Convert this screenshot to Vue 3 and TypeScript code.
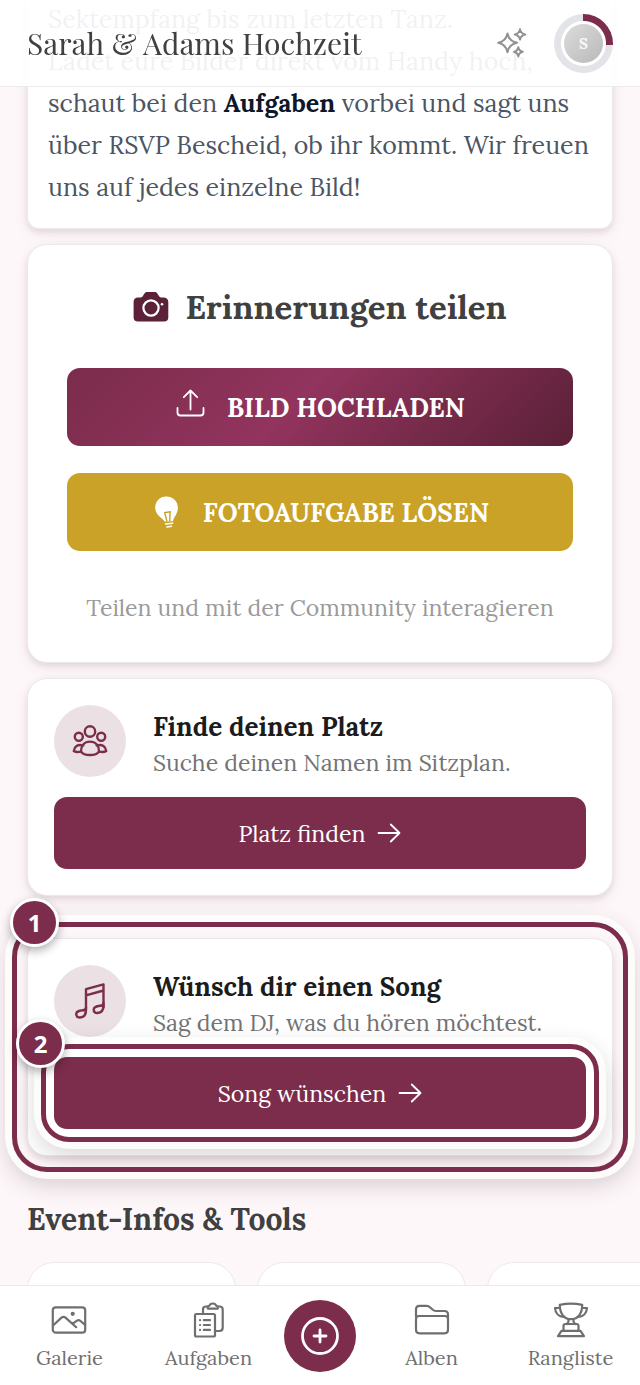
<script setup lang="ts">
import { ref } from 'vue'

interface NavItem {
  label: string
  icon: 'gallery' | 'tasks' | 'albums' | 'ranking'
}

const eventTitle = 'Sarah & Adams Hochzeit'
const leftNav: NavItem[] = [
  { label: 'Galerie', icon: 'gallery' },
  { label: 'Aufgaben', icon: 'tasks' },
]
const rightNav: NavItem[] = [
  { label: 'Alben', icon: 'albums' },
  { label: 'Rangliste', icon: 'ranking' },
]
const toolCards = ref<number[]>([1, 2, 3])
</script>

<template>
  <div class="app">
    <header class="topbar">
      <h1 class="topbar-title">{{ eventTitle }}</h1>
      <div class="topbar-actions">
        <button class="icon-button" type="button" aria-label="Highlights">
          <svg width="30" height="30" viewBox="0 0 30 30" fill="none" stroke="currentColor" stroke-width="2" stroke-linejoin="round">
            <path d="M10.5 5.5Q12 13.2 20 14.8Q12 16.400 10.500 24.200Q9 16.400 1.200 14.800Q9 13.200 10.500 5.500Z" />
            <path d="M23 1.200Q23.700 5.600 28.300 6.500Q23.700 7.400 23 11.600Q22.300 7.400 17.800 6.500Q22.300 5.600 23 1.200Z" />
            <path d="M21.300 19.200Q22 23 25.800 23.800Q22 24.600 21.300 28.400Q20.600 24.600 17 23.800Q20.600 23 21.300 19.200Z" />
          </svg>
        </button>
        <button class="avatar" type="button" aria-label="Profil">
          <span class="avatar-face">S</span>
        </button>
      </div>
    </header>

    <main class="content">
      <section class="card welcome">
        <p>
          Sektempfang bis zum letzten Tanz.<br />
          Ladet eure Bilder direkt vom Handy hoch,<br />
          schaut bei den <strong>Aufgaben</strong> vorbei und sagt uns<br />
          über RSVP Bescheid, ob ihr kommt. Wir freuen<br />
          uns auf jedes einzelne Bild!
        </p>
      </section>

      <section class="card share">
        <h2 class="share-title">
          <svg width="36" height="32" viewBox="0 0 36 32">
            <path fill="#5c2139" d="M5 6.500H7.500C9 6.500 9.500 5.600 10.300 4.300L11.500 2.500C12.200 1.400 13 1 14.300 1H21.500C22.800 1 23.600 1.400 24.300 2.500L25.500 4.300C26.300 5.600 26.800 6.500 28.300 6.500H30.500C33.500 6.500 35.300 8 35.300 11V26.500C35.300 29.200 33.800 30.600 31 30.600H5C2.200 30.600 .6 29.200 .6 26.500V11C.6 8 2.200 6.500 5 6.500Z" />
            <circle cx="18" cy="17" r="7.600" fill="none" stroke="#fff" stroke-width="2.200" />
            <circle cx="29" cy="13.300" r="1.300" fill="#fff" />
          </svg>
          Erinnerungen teilen
        </h2>
        <div class="share-buttons">
          <button class="big-button upload" type="button">
            <svg class="raised" width="31" height="28" viewBox="-1.500 0 31 28" fill="none" stroke="currentColor" stroke-width="1.800" stroke-linecap="round" stroke-linejoin="round">
              <path d="M14 20.500V1.500M7.300 8.200L14 1.500L20.700 8.200M1 19V23.500Q1 26.500 4 26.500H24Q27 26.500 27 23.500V19" />
            </svg>
            BILD HOCHLADEN
          </button>
          <button class="big-button task" type="button">
            <svg width="31" height="32" viewBox="-3.500 0 31 32">
              <path fill="#fff" d="M11.700 .5C18.500 .5 23.400 5.400 23.400 11.800C23.400 18.200 19 21 18.600 25.300L10 25.600C9 22.500 .7 19.600 .7 11.500C.7 5.300 5.300 .5 11.700 .5Z" />
              <path fill="none" stroke="#c9a227" stroke-width="1.400" d="M10.200 16.500L12.400 25.300M15.600 16L15.200 25.200M9.500 16.700L16.500 15.800" />
              <path fill="none" stroke="#fff" stroke-width="1.600" stroke-linecap="round" d="M11 28L18.200 27.200M12.500 31L17 30.200" />
            </svg>
            FOTOAUFGABE LÖSEN
          </button>
        </div>
        <p class="share-note">Teilen und mit der Community interagieren</p>
      </section>

      <section class="card action">
        <div class="action-head">
          <span class="bubble">
            <svg width="36" height="34" viewBox="0 0 36 34" fill="none" stroke="currentColor" stroke-width="2.400" stroke-linecap="round" stroke-linejoin="round">
              <circle cx="18" cy="7.500" r="5.200" />
              <circle cx="6.800" cy="12.800" r="4" />
              <circle cx="29.200" cy="12.800" r="4" />
              <path d="M9 27.600C9 21.500 12.500 17.600 18 17.600S27 21.500 27 27.600C25.500 29.800 22 31 18 31S10.500 29.800 9 27.600Z" />
              <path d="M11.300 21.400C5.500 20 2.200 22.500 1.800 27C3.600 28.200 6 28.200 9 27.600M24.700 21.400C30.500 20 33.800 22.500 34.200 27C32.400 28.200 30 28.200 27 27.600" />
            </svg>
          </span>
          <div class="action-text">
            <h3>Finde deinen Platz</h3>
            <p>Suche deinen Namen im Sitzplan.</p>
          </div>
        </div>
        <button class="wide-button" type="button">
          Platz finden
          <svg width="24" height="20" viewBox="0 0 24 20" fill="none" stroke="currentColor" stroke-width="1.800" stroke-linecap="round" stroke-linejoin="round">
            <path d="M1.500 10H22.500M13.800 1.500L22.500 10L13.800 18.500" />
          </svg>
        </button>
      </section>

      <section class="card action highlighted">
        <div class="action-head">
          <span class="bubble">
            <svg width="30" height="36" viewBox="0 0 30 36" fill="none" stroke="currentColor" stroke-width="2.400" stroke-linecap="round" stroke-linejoin="round">
              <path d="M11 26.500V6.200L28.500 1.400V24.200M11 12.300L28.500 7.500" />
              <path d="M11 26.500C11 32 8.500 34.500 5 34.500C2.500 34.500 1.200 33 1.200 31C1.200 27.800 4.500 27.500 8 27.200C10 27 11 26.500 11 24.500" />
              <path d="M28.500 22C28.500 27.500 26 30 22.500 30C20 30 18.700 28.500 18.700 26.500C18.700 23.500 22 23.200 25.500 22.700C27.500 22.400 28.500 22 28.500 20" />
            </svg>
          </span>
          <div class="action-text">
            <h3>Wünsch dir einen Song</h3>
            <p>Sag dem DJ, was du hören möchtest.</p>
          </div>
        </div>
        <div class="spot">
          <button class="wide-button" type="button">
            Song wünschen
            <svg width="24" height="20" viewBox="0 0 24 20" fill="none" stroke="currentColor" stroke-width="1.800" stroke-linecap="round" stroke-linejoin="round">
              <path d="M1.500 10H22.500M13.800 1.500L22.500 10L13.800 18.500" />
            </svg>
          </button>
          <span class="ring ring-inner"></span>
          <span class="badge badge-inner">2</span>
        </div>
        <span class="ring ring-outer"></span>
        <span class="badge badge-outer">1</span>
      </section>

      <section class="tools">
        <h2>Event-Infos &amp; Tools</h2>
        <div class="tool-row">
          <article v-for="n in toolCards" :key="n" class="tool-card"></article>
        </div>
      </section>
    </main>

    <nav class="tabbar">
      <a v-for="item in leftNav" :key="item.label" class="tab" href="#">
        <svg v-if="item.icon === 'gallery'" width="36" height="36" viewBox="0 0 36 36" fill="none" stroke="currentColor" stroke-width="2.200" stroke-linecap="round" stroke-linejoin="round">
          <rect x="1.800" y="5.300" width="32.400" height="25.400" rx="3" />
          <path d="M2 23.500L10.500 15.600Q12.500 14 14.500 15.600L25.200 25.200M21.500 21.800L26 18.600Q27.800 17.500 29.500 19L34 22.800" />
          <circle cx="21.700" cy="11.800" r="1" fill="currentColor" />
        </svg>
        <svg v-else width="36" height="36" viewBox="0 0 36 36" fill="none" stroke="currentColor" stroke-width="2.200" stroke-linecap="round" stroke-linejoin="round">
          <rect x="4" y="12" width="20" height="22.500" rx="1.500" />
          <path d="M12 11.500V7.500Q12 4.500 15 4.500H16.500M27 4.500H28.500Q31.700 4.500 31.700 7.500V25.500Q31.700 29 28.500 29H25" />
          <path d="M16.800 6.600V4.500Q18.500 3.700 19.200 2.400Q20 1.500 21.800 1.500T24.400 2.400Q25.100 3.700 26.800 4.500V6.600Z" />
          <path d="M9 18.200H9.100M12.800 18.200H19M9 23H9.100M12.800 23H19M9 27.900H9.100M12.800 27.900H19" />
        </svg>
        <span>{{ item.label }}</span>
      </a>

      <button class="fab" type="button" aria-label="Hinzufügen">
        <svg width="40" height="40" viewBox="0 0 40 40" fill="none" stroke="currentColor" stroke-width="2.800" stroke-linecap="round">
          <circle cx="20" cy="20" r="17.500" />
          <path d="M20 14V26M14 20H26" />
        </svg>
      </button>

      <a v-for="item in rightNav" :key="item.label" class="tab" href="#">
        <svg v-if="item.icon === 'albums'" width="36" height="36" viewBox="0 0 36 36" fill="none" stroke="currentColor" stroke-width="2.200" stroke-linecap="round" stroke-linejoin="round">
          <path d="M2 14.500V7.500Q2 3.800 5.500 3.800H12.500Q14.500 3.800 16 5.200L18.500 7.500Q20 9 22 9H30.500Q34 9 34 12.500V27.500Q34 31.300 30.500 31.300H5.500Q2 31.300 2 27.500V17Q2 14 5 14H31Q34 14 34 17" />
        </svg>
        <svg v-else width="36" height="36" viewBox="0 0 36 36" fill="none" stroke="currentColor" stroke-width="2.200" stroke-linecap="round" stroke-linejoin="round">
          <path d="M6.800 2.800Q18 .5 29.200 2.800C29.200 11 25.500 17.200 18 17.200S6.800 11 6.800 2.800Z" />
          <path d="M7 6H2C2.300 11 5.500 14.800 11.300 14.800M29 6H34C33.700 11 30.500 14.800 24.700 14.800" />
          <path d="M15.500 17.200V19.500L14 22M20.500 17.200V19.500L22 22M10.500 28.500V24Q10.500 22 12.500 22H23.500Q25.500 22 25.500 24V28.500" />
          <path d="M8.500 28.800H27.500L31 34.200H5Z" />
        </svg>
        <span>{{ item.label }}</span>
      </a>
    </nav>
  </div>
</template>

<style scoped>
.app {
  --wine: #7b2d4b;
  --line: #ebe9eb;
  position: relative;
  height: 100vh;
  overflow: hidden;
  background: #fef7f9;
  font-family: 'Lora', 'Liberation Serif', serif;
  color: #404040;
}

h1, h2, h3, p {
  margin: 0;
}

button {
  font-family: inherit;
  border: 0;
  padding: 0;
  cursor: pointer;
}

svg {
  flex: none;
  display: block;
}

.topbar {
  position: fixed;
  top: 0;
  left: 0;
  right: 0;
  z-index: 10;
  display: flex;
  align-items: center;
  justify-content: space-between;
  height: 87px;
  box-sizing: border-box;
  padding: 0 27px;
  background: rgba(255, 255, 255, 0.92);
  border-bottom: 1px solid #ebebeb;
}

.topbar-title {
  font-family: 'Playfair Display', 'Liberation Serif', serif;
  font-size: 30px;
  font-weight: 400;
  line-height: 40px;
  white-space: nowrap;
}

.topbar-actions {
  display: flex;
  align-items: center;
  gap: 27px;
}

.icon-button {
  background: none;
  color: #929292;
}

.avatar {
  display: grid;
  place-items: center;
  width: 59px;
  height: 59px;
  border-radius: 50%;
  background:
    radial-gradient(circle, #fff 0 22px, transparent 23px),
    conic-gradient(var(--wine) 0 26%, #e3e4e8 26%);
}

.avatar-face {
  width: 39px;
  border-radius: 50%;
  background: linear-gradient(135deg, #dcdcdc, #b9b9b9);
  color: #f7f7f7;
  font-size: 15px;
  font-weight: 700;
  line-height: 39px;
}

.content {
  display: flex;
  flex-direction: column;
  gap: 15px;
  margin-top: -2px;
  padding: 0 27px;
}

.card {
  box-sizing: border-box;
  background: #fff;
  border: 1px solid var(--line);
  border-radius: 20px;
  box-shadow:
    0 3px 6px rgba(60, 30, 45, 0.1),
    0 6px 16px rgba(60, 30, 45, 0.06);
}

.welcome {
  padding: 0 20px 20px;
  border-top: 0;
  border-radius: 0 0 12px 12px;
  color: #4b5563;
  font-size: 25px;
  line-height: 42px;
  white-space: nowrap;
}

.welcome strong {
  color: #0f172a;
}

.share {
  padding: 39px 39px 37px;
  text-align: center;
}

.share-title {
  display: flex;
  align-items: center;
  justify-content: center;
  gap: 16px;
  font-size: 33px;
  line-height: 46px;
}

.share-buttons {
  display: flex;
  flex-direction: column;
  gap: 27px;
  margin-top: 38px;
}

.big-button {
  display: flex;
  align-items: center;
  justify-content: center;
  gap: 21px;
  height: 78px;
  border-radius: 13px;
  color: #fff;
  font-size: 26px;
  font-weight: 700;
}

.upload {
  background: linear-gradient(135deg, #7b2c4b 0%, #92345e 45%, #782b4b 70%, #5a2038 100%);
}

.raised {
  margin-bottom: 8px;
}

.task {
  background: #c9a227;
}

.share-note {
  margin-top: 40px;
  color: #9a9a9a;
  font-size: 23px;
  line-height: 34px;
}

.action {
  position: relative;
  padding: 26px;
}

.action-head {
  display: flex;
  align-items: center;
  gap: 27px;
  margin-bottom: 20px;
}

.bubble {
  display: grid;
  place-items: center;
  flex: none;
  width: 72px;
  height: 72px;
  border-radius: 50%;
  background: #ebe0e4;
  color: var(--wine);
}

.action-text {
  padding-top: 4px;
  margin-bottom: -4px;
  white-space: nowrap;
}

.action-text h3 {
  color: #1c1c1c;
  font-size: 26px;
  line-height: 36px;
}

.action-text p {
  color: #737373;
  font-size: 23px;
  line-height: 36px;
}

.wide-button {
  display: flex;
  align-items: center;
  justify-content: center;
  gap: 12px;
  width: 100%;
  height: 72px;
  border-radius: 13px;
  background: var(--wine);
  color: #fff;
  font-size: 23px;
}

.highlighted {
  margin-top: 27px;
}

.spot {
  position: relative;
}

.ring {
  position: absolute;
  border: 5px solid var(--wine);
  pointer-events: none;
  box-shadow:
    0 0 0 7px rgba(253, 253, 252, 0.95),
    0 8px 24px 4px rgba(40, 20, 30, 0.2);
}

.ring-inner {
  inset: -13px;
  border-radius: 28px;
}

.ring-outer {
  inset: -17px -16px;
  border-radius: 35px;
}

.badge {
  position: absolute;
  z-index: 2;
  box-sizing: border-box;
  width: 49px;
  height: 49px;
  border: 3px solid #fff;
  border-radius: 50%;
  background: var(--wine);
  box-shadow: 0 4px 10px rgba(0, 0, 0, 0.3);
  color: #fff;
  font-family: 'Noto Sans', sans-serif;
  font-size: 24px;
  font-weight: 700;
  line-height: 43px;
  text-align: center;
}

.badge-inner {
  top: -38px;
  left: -38px;
}

.badge-outer {
  top: -41px;
  left: -18px;
}

.tools {
  margin-top: 29px;
}

.tools h2 {
  font-size: 30px;
  line-height: 38px;
}

.tool-row {
  display: grid;
  grid-auto-flow: column;
  grid-auto-columns: 209px;
  gap: 21px;
  margin: 24px -27px 0 0;
  overflow: hidden;
}

.tool-card {
  height: 160px;
  background: #fff;
  border: 1px solid var(--line);
  border-radius: 27px;
  box-sizing: border-box;
}

.tabbar {
  position: fixed;
  left: 0;
  right: 0;
  bottom: 0;
  z-index: 10;
  display: grid;
  grid-template-columns: 1fr 1fr 84px 1fr 1fr;
  align-items: center;
  justify-items: center;
  height: 100px;
  box-sizing: border-box;
  background: #fff;
  border-top: 1px solid var(--line);
}

.tab {
  display: flex;
  flex-direction: column;
  align-items: center;
  gap: 8px;
  color: #6f6f6f;
  font-size: 20px;
  line-height: 24px;
  text-decoration: none;
}

.fab {
  display: grid;
  place-items: center;
  width: 72px;
  height: 72px;
  border-radius: 50%;
  background: var(--wine);
  color: #fff;
}
</style>
